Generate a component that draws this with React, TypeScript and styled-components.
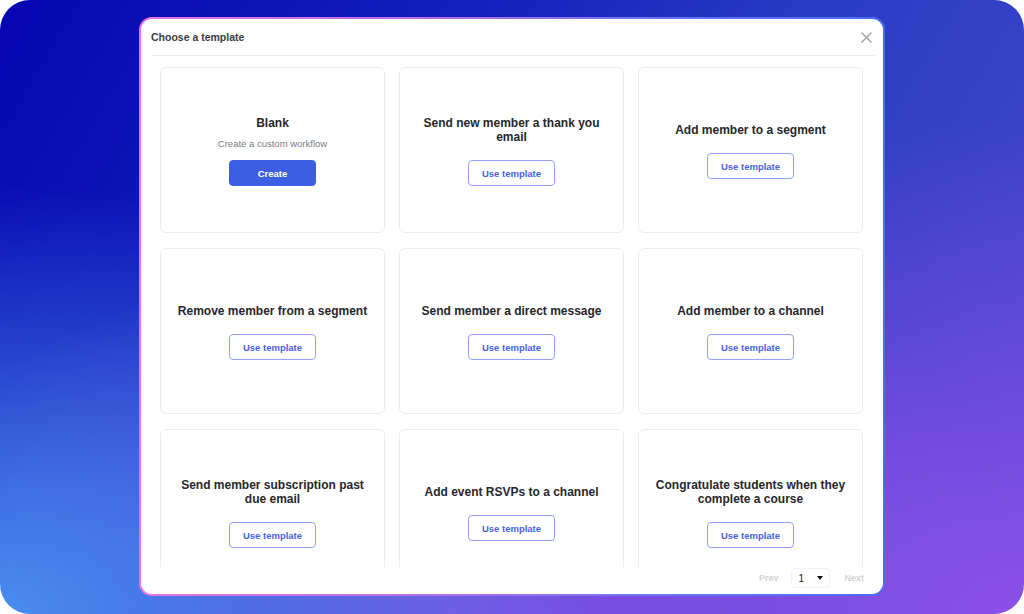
import React from "react";
import styled, { createGlobalStyle } from "styled-components";

const Global = createGlobalStyle`
  html, body { margin: 0; padding: 0; background: #ffffff; }
  body { font-family: "Liberation Sans", Arial, sans-serif; }
  * { box-sizing: border-box; }
`;

const Stage = styled.div`
  width: 1024px;
  height: 614px;
  border-radius: 30px;
  overflow: hidden;
  display: flex;
  justify-content: center;
  padding-top: 17px;
  background:
    radial-gradient(ellipse 60% 70% at 0% 100%, rgba(74, 142, 240, 1) 0%, rgba(74, 142, 240, 0) 100%),
    radial-gradient(ellipse 70% 80% at 100% 100%, rgba(140, 80, 232, 1) 0%, rgba(140, 80, 232, 0) 100%),
    radial-gradient(ellipse 60% 60% at 45% 100%, rgba(130, 80, 226, 0.9) 0%, rgba(130, 80, 226, 0) 100%),
    linear-gradient(120deg, #0606b2 0%, #1420bc 35%, #2a3cc4 60%, #4a48d0 100%);
`;

const ModalFrame = styled.div`
  width: 746px;
  height: 579px;
  padding: 2px;
  border-radius: 13px;
  background: linear-gradient(90deg, #e874e4 0%, #b070e8 40%, #6a74f0 70%, #4a6cf2 100%);
`;

const Modal = styled.div`
  width: 100%;
  height: 100%;
  border-radius: 11px;
  background: #ffffff;
  display: flex;
  flex-direction: column;
  overflow: hidden;
`;

const Header = styled.div`
  height: 37px;
  flex-shrink: 0;
  margin: 0 8px 0 10px;
  border-bottom: 1px solid #ebebee;
  display: flex;
  align-items: center;
  justify-content: space-between;
`;

const Title = styled.h2`
  margin: 0;
  font-size: 10.5px;
  font-weight: 700;
  color: #3a3a44;
`;

const CloseBtn = styled.button`
  border: none;
  background: none;
  padding: 0;
  width: 14px;
  height: 14px;
  display: flex;
  align-items: center;
  justify-content: center;
  cursor: pointer;
  margin-right: 2px;
`;

const Body = styled.div`
  flex: 1;
  overflow: hidden;
  padding: 11px 19px 0 19px;
`;

const Grid = styled.div`
  display: grid;
  grid-template-columns: repeat(3, 225px);
  grid-auto-rows: 166px;
  column-gap: 14px;
  row-gap: 15px;
`;

const Card = styled.div`
  border: 1.5px solid #ececf0;
  border-radius: 6px;
  display: flex;
  flex-direction: column;
  align-items: center;
  justify-content: center;
  padding: 2px 16px 0;
  text-align: center;
`;

const CardTitle = styled.div`
  font-size: 12px;
  line-height: 14px;
  font-weight: 700;
  color: #26262c;
`;

const CardSub = styled.div`
  margin-top: 8px;
  font-size: 9.5px;
  line-height: 12px;
  color: #7a7a82;
`;

const Btn = styled.button<{ $primary?: boolean; $gap: number }>`
  margin-top: ${(p) => p.$gap}px;
  width: 87px;
  height: 26px;
  border-radius: 4px;
  font-family: "Liberation Sans", Arial, sans-serif;
  font-size: 9.5px;
  font-weight: 700;
  cursor: pointer;
  border: 1.5px solid ${(p) => (p.$primary ? "#3b5ee2" : "#8fa2f4")};
  background: ${(p) => (p.$primary ? "#3b5ee2" : "#ffffff")};
  color: ${(p) => (p.$primary ? "#ffffff" : "#4a62e4")};
`;

const Footer = styled.div`
  height: 27px;
  flex-shrink: 0;
  display: flex;
  align-items: center;
  justify-content: flex-end;
  padding: 0 19px 5px 0;
`;

const PageLink = styled.span`
  font-size: 9px;
  font-weight: 700;
  color: #d2d2d6;
`;

const Select = styled.div`
  margin: 0 14px 0 13px;
  width: 39px;
  height: 20px;
  border: 1px solid #f0f0f2;
  border-radius: 4px;
  display: flex;
  align-items: center;
  justify-content: space-between;
  padding: 0 6px 0 6px;
  font-size: 10px;
  color: #222;
`;

const Caret = styled.span`
  width: 0;
  height: 0;
  border-left: 3.5px solid transparent;
  border-right: 3.5px solid transparent;
  border-top: 4px solid #111;
`;

type Tpl = { title: string; blank?: boolean };

const templates: Tpl[] = [
  { title: "Blank", blank: true },
  { title: "Send new member a thank you email" },
  { title: "Add member to a segment" },
  { title: "Remove member from a segment" },
  { title: "Send member a direct message" },
  { title: "Add member to a channel" },
  { title: "Send member subscription past due email" },
  { title: "Add event RSVPs to a channel" },
  { title: "Congratulate students when they complete a course" },
];

export default function App() {
  return (
    <>
      <Global />
      <Stage>
        <ModalFrame>
          <Modal>
            <Header>
              <Title>Choose a template</Title>
              <CloseBtn aria-label="Close">
                <svg width="11" height="11" viewBox="0 0 11 11">
                  <path d="M1 1L10 10M10 1L1 10" stroke="#9a9aa2" strokeWidth="1.3" strokeLinecap="round" />
                </svg>
              </CloseBtn>
            </Header>
            <Body>
              <Grid>
                {templates.map((t) =>
                  t.blank ? (
                    <Card key={t.title}>
                      <CardTitle>{t.title}</CardTitle>
                      <CardSub>Create a custom workflow</CardSub>
                      <Btn $primary $gap={10}>Create</Btn>
                    </Card>
                  ) : (
                    <Card key={t.title}>
                      <CardTitle>{t.title}</CardTitle>
                      <Btn $gap={16}>Use template</Btn>
                    </Card>
                  )
                )}
              </Grid>
            </Body>
            <Footer>
              <PageLink>Prev</PageLink>
              <Select>
                <span>1</span>
                <Caret />
              </Select>
              <PageLink>Next</PageLink>
            </Footer>
          </Modal>
        </ModalFrame>
      </Stage>
    </>
  );
}
